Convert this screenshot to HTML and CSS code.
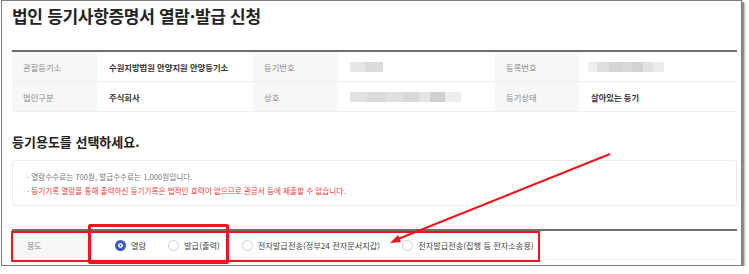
FILE: index.html
```html
<!DOCTYPE html>
<html lang="ko">
<head>
    <meta charset="UTF-8">
    <title>법인 등기사항증명서 열람·발급 신청</title>
    <link rel="stylesheet" href="styles.css">
</head>
<body>
    <div class="window">
        <h1 class="page-title">법인 등기사항증명서 열람·발급 신청</h1>

        <div class="info-table">
            <div class="cell label">관할등기소</div>
            <div class="cell value">수원지방법원 안양지원 안양등기소</div>
            <div class="cell label">등기번호</div>
            <div class="cell value"><span class="masked mask-short"></span></div>
            <div class="cell label">등록번호</div>
            <div class="cell value"><span class="masked mask-mid"></span></div>

            <div class="cell label">법인구분</div>
            <div class="cell value">주식회사</div>
            <div class="cell label">상호</div>
            <div class="cell value"><span class="masked mask-long"></span></div>
            <div class="cell label">등기상태</div>
            <div class="cell value">살아있는 등기</div>
        </div>

        <h2 class="section-title">등기용도를 선택하세요.</h2>

        <div class="notice">
            <p>· 열람수수료는 700원, 발급수수료는 1,000원입니다.</p>
            <p class="warn">· 등기기록 열람을 통해 출력하신 등기기록은 법적인 효력이 없으므로 관공서 등에 제출할 수 없습니다.</p>
        </div>

        <div class="purpose-row">
            <div class="purpose-label">용도</div>
            <div class="purpose-options">
                <label class="option"><span class="radio checked"></span>열람</label>
                <label class="option"><span class="radio"></span>발급(출력)</label>
                <label class="option"><span class="radio"></span>전자발급전송(정부24 전자문서지갑)</label>
                <label class="option"><span class="radio"></span>전자발급전송(집행 등 전자소송용)</label>
            </div>
        </div>
    </div>

    <div class="mark mark-row"></div>
    <div class="mark mark-radios"></div>
    <svg class="arrow" width="749" height="274" viewBox="0 0 749 274">
        <line x1="610" y1="154" x2="398" y2="239" stroke="#f0141e" stroke-width="2"/>
        <polygon points="390,243 398,235 401,242" fill="#f0141e"/>
    </svg>
</body>
</html>
```

FILE: styles.css
```css
* {
    margin: 0;
    padding: 0;
    box-sizing: border-box;
}

body {
    font-family: 'Noto Sans CJK KR', 'Noto Sans', sans-serif;
    background: #ffffff;
    color: #333333;
}

.window {
    width: 741px;
    height: 266px;
    margin-left: 1px;
    padding: 0 4px 0 10px;
    border: 1px solid #7d7d7d;
    box-shadow: 2px 2px 0 #8c8c8c, 3px 3px 2px #b5b5b5;
    overflow: hidden;
}

.page-title {
    font-size: 17px;
    font-weight: bold;
    line-height: 22px;
    margin-top: 4px;
    color: #222222;
    letter-spacing: -0.3px;
}

.info-table {
    display: grid;
    grid-template-columns: 85px 156px 85px 157px 84px 157px;
    grid-auto-rows: 30px;
    margin-top: 23px;
    border-top: 2px solid #6e6e6e;
}

.cell {
    display: flex;
    align-items: center;
    font-size: 8.3px;
    border-bottom: 1px solid #eeeeee;
}

.cell.label {
    background: #f7f7f7;
    color: #8a8a8a;
    padding-left: 11px;
}

.cell.value {
    font-weight: bold;
    color: #333333;
    padding-left: 12px;
}

.masked {
    display: inline-block;
    height: 10px;
    filter: blur(0.6px);
}

.mask-short {
    width: 33px;
    background: linear-gradient(90deg, #e6e6e6 0 45%, #dcdcdc 45% 100%);
}

.mask-mid {
    width: 76px;
    margin-left: -3px;
    background: linear-gradient(90deg, #eeeeee 0 12%, #dedede 12% 28%, #d4d4d4 28% 45%, #dadada 45% 58%, #d2d2d2 58% 72%, #e0e0e0 72% 86%, #ececec 86% 100%);
}

.mask-long {
    width: 111px;
    background: linear-gradient(90deg, #e2e2e2 0 15%, #dadada 15% 32%, #e0e0e0 32% 48%, #d8d8d8 48% 62%, #e4e4e4 62% 72%, #cfcfcf 72% 86%, #ededed 86% 100%);
}

.section-title {
    font-size: 13px;
    font-weight: bold;
    line-height: 18px;
    margin-top: 21px;
    color: #222222;
}

.notice {
    margin-top: 9px;
    border: 1px solid #ebebeb;
    border-radius: 3px;
    padding: 9px 14px 7px;
    font-size: 7.6px;
    line-height: 14px;
    color: #777777;
}

.notice .warn {
    color: #f03a3a;
}

.purpose-row {
    display: flex;
    height: 31px;
    margin-top: 23px;
    border-top: 2px solid #6e6e6e;
    border-bottom: 1px solid #eeeeee;
}

.purpose-label {
    width: 80px;
    background: #f7f7f7;
    color: #8a8a8a;
    font-size: 8px;
    padding-left: 15px;
    display: flex;
    align-items: center;
}

.purpose-options {
    display: flex;
    align-items: center;
    gap: 22px;
    padding-left: 23px;
    font-size: 8.2px;
    color: #444444;
}

.option {
    display: flex;
    align-items: center;
    gap: 5px;
}

.radio {
    width: 11px;
    height: 11px;
    border-radius: 50%;
    border: 1px solid #cfcfcf;
    background: #ffffff;
}

.radio.checked {
    border: 3px solid #3f56c9;
    background: #3f56c9;
    box-shadow: inset 0 0 0 1.5px #ffffff;
}

.mark {
    position: absolute;
    border-style: solid;
    border-color: #f0141e;
}

.mark-row {
    left: 11px;
    top: 231px;
    width: 529px;
    height: 31px;
    border-width: 2px;
}

.mark-radios {
    left: 88px;
    top: 224px;
    width: 141px;
    height: 40px;
    border-width: 3px;
    border-radius: 2px;
}

.arrow {
    position: absolute;
    left: 0;
    top: 0;
    pointer-events: none;
}
```
